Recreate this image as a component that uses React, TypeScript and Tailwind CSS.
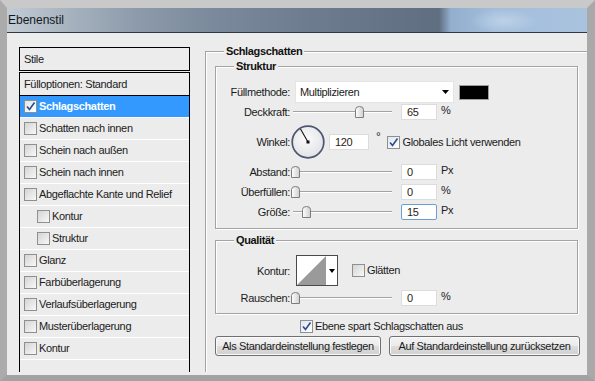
import React from "react";

type StyleRow = { label: string; checked?: boolean; active?: boolean; indent?: boolean };

const styleRows: StyleRow[] = [
  { label: "Schlagschatten", checked: true, active: true },
  { label: "Schatten nach innen" },
  { label: "Schein nach außen" },
  { label: "Schein nach innen" },
  { label: "Abgeflachte Kante und Relief" },
  { label: "Kontur", indent: true },
  { label: "Struktur", indent: true },
  { label: "Glanz" },
  { label: "Farbüberlagerung" },
  { label: "Verlaufsüberlagerung" },
  { label: "Musterüberlagerung" },
  { label: "Kontur" },
];

function Check({ checked }: { checked?: boolean }) {
  return (
    <span
      className={
        "flex h-[13px] w-[13px] shrink-0 items-center justify-center border border-[#8e8f8f] " +
        (checked
          ? "bg-[linear-gradient(135deg,#dfe6f0,#ffffff)]"
          : "bg-[linear-gradient(135deg,#d4d4d4,#f8f8f8)]")
      }
    >
      {checked && (
        <svg width="11" height="11" viewBox="0 0 11 11">
          <path d="M2 5.5 L4.5 8.5 L9.5 1.5" fill="none" stroke="#2b4b8c" strokeWidth="1.6" />
        </svg>
      )}
    </span>
  );
}

function Group({
  title,
  className,
  children,
}: {
  title: string;
  className?: string;
  children: React.ReactNode;
}) {
  return (
    <div
      className={`relative border border-[#a3a3a3] shadow-[inset_1px_1px_0_#fff,1px_1px_0_#fff] ${className ?? ""}`}
    >
      <span className="absolute left-[18px] top-[-8px] bg-[#ececec] px-[2px] text-[11px] font-bold leading-[14px] text-[#111]">
        {title}
      </span>
      {children}
    </div>
  );
}

function Label({ children }: { children: React.ReactNode }) {
  return <span className="w-[74px] shrink-0 text-right leading-[14px]">{children}</span>;
}

function Thumb() {
  return (
    <svg width="9" height="12" viewBox="0 0 9 12">
      <defs>
        <linearGradient id="th" x1="0" y1="0" x2="1" y2="0">
          <stop offset="0" stopColor="#ffffff" />
          <stop offset="1" stopColor="#cfcfcf" />
        </linearGradient>
      </defs>
      <path d="M0.5 11.5 V3.5 Q0.5 0.5 4.5 0.5 Q8.5 0.5 8.5 3.5 V11.5 Z" fill="url(#th)" stroke="#7d7d7d" />
    </svg>
  );
}

function Slider({ thumb }: { thumb: string }) {
  return (
    <div className="relative ml-[1px] h-[12px] w-[104px] shrink-0">
      <div className="absolute left-[2px] right-[3px] top-[5px] h-[2px] border-t border-[#a2a2a2] bg-white" />
      <div className={`absolute top-0 ${thumb}`}>
        <Thumb />
      </div>
    </div>
  );
}

function NumBox({ value, focus, className }: { value: string; focus?: boolean; className?: string }) {
  return (
    <div
      className={
        `flex h-[16px] shrink-0 items-center bg-white pl-[5px] leading-none text-[#2a2114] ` +
        (focus ? "rounded-[2px] border border-[#6a9fd4] " : "border border-[#dcdcdc] ") +
        (className ?? "w-[36px]")
      }
    >
      {value}
    </div>
  );
}

function SliderRow({
  label,
  thumb,
  value,
  unit,
  focus,
  className,
}: {
  label: string;
  thumb: string;
  value: string;
  unit: string;
  focus?: boolean;
  className?: string;
}) {
  return (
    <div className={`flex h-[16px] items-center ${className ?? ""}`}>
      <Label>{label}</Label>
      <Slider thumb={thumb} />
      <div className="ml-[6px]">
        <NumBox value={value} focus={focus} />
      </div>
      <span className="ml-[4px] self-start leading-[12px]">{unit}</span>
    </div>
  );
}

function Dial() {
  return (
    <svg width="34" height="34" viewBox="0 0 34 34" className="ml-[1px] shrink-0">
      <defs>
        <radialGradient id="dg" cx="0.45" cy="0.4" r="0.6">
          <stop offset="0" stopColor="#fbfbfb" />
          <stop offset="1" stopColor="#e2e3e6" />
        </radialGradient>
      </defs>
      <circle cx="17" cy="17" r="15.8" fill="url(#dg)" stroke="#4d5672" strokeWidth="1.7" />
      <line x1="17" y1="17" x2="9.5" y2="4" stroke="#111" strokeWidth="1.1" />
      <rect x="15.5" y="15.5" width="3" height="3" fill="#111" />
    </svg>
  );
}

function Button({ children, className }: { children: React.ReactNode; className: string }) {
  return (
    <div
      className={`flex h-[20px] items-center justify-center rounded-[3px] border border-[#707070] bg-[linear-gradient(#f3f3f3_0%,#ebebeb_48%,#dddddd_52%,#d0d0d0_100%)] shadow-[inset_0_0_0_1px_#fbfbfb] ${className}`}
    >
      {children}
    </div>
  );
}

export default function App() {
  return (
    <div className="h-[381px] w-[595px] overflow-hidden border-b-[6px] border-l-[7px] border-r-[8px] border-t-[8px] border-b-[#a2a2a2] border-l-[#ababab] border-r-[#a9a9a9] border-t-[#c9c9c9] bg-[#ececec] font-['Liberation_Sans',Arial,sans-serif] text-[11px] tracking-[-0.35px] text-[#1b1b1b]">
      <div className="flex h-full flex-col">
        <div className="flex h-[24px] items-center bg-[radial-gradient(ellipse_34px_12px_at_497px_13px,rgba(205,222,240,0.6),rgba(205,222,240,0)),linear-gradient(to_right,#c3ccd5_0%,#a8b4c0_10%,#8d9bab_22%,#7a899b_36%,#6d7d8f_52%,#647486_66%,#5f6f81_74.5%,#93aece_76.5%,#a3bedb_84%,#a9c3df_100%)] pl-[1px] text-[12px] tracking-normal text-[#121820]">
          Ebenenstil
        </div>
        <div className="h-[1px] bg-[#2f3943]" />
        <div className="flex flex-1">
          {/* left: styles list */}
          <div className="ml-[12px] flex w-[171px] flex-col pb-[3px] pt-[14px]">
            <div className="flex h-[24px] items-center border border-black pl-[4px]">Stile</div>
            <div className="mt-[1px] flex flex-1 flex-col border-x border-t border-black">
              <div className="flex h-[23px] items-center border-b border-black pl-[4px]">Fülloptionen: Standard</div>
              {styleRows.map((r, i) => (
                <div
                  key={i}
                  className={
                    "flex h-[22px] items-center gap-[2px] border-b border-white " +
                    (r.indent ? "pl-[17px] " : "pl-[4px] ") +
                    (r.active ? "bg-[#3399ff] font-bold text-white" : "")
                  }
                >
                  <Check checked={r.checked} />
                  <span>{r.label}</span>
                </div>
              ))}
            </div>
          </div>

          {/* right: settings */}
          <div className="ml-[15px] flex flex-1 flex-col pb-[3px] pt-[18px]">
            <div className="relative flex flex-1 flex-col border-l border-t border-[#a3a3a3] shadow-[inset_1px_1px_0_#fff]">
              <span className="absolute left-[18px] top-[-8px] bg-[#ececec] px-[2px] text-[11px] font-bold leading-[14px] text-[#111]">
                Schlagschatten
              </span>

              <Group title="Struktur" className="ml-[9px] mt-[14px] h-[163px] w-[363px]">
                <div className="flex flex-col pt-[14px]">
                  <div className="flex h-[22px] items-center">
                    <Label>Füllmethode:</Label>
                    <div className="ml-[5px] flex h-[22px] w-[159px] items-center justify-between border border-[#e4e4e4] bg-white pl-[4px] pr-[4px]">
                      <span>Multiplizieren</span>
                      <svg width="7" height="4" viewBox="0 0 7 4">
                        <path d="M0 0 H7 L3.5 4 Z" fill="#000" />
                      </svg>
                    </div>
                    <div className="ml-[5px] h-[15px] w-[30px] border border-[#9c9c9c] bg-black" />
                  </div>

                  <SliderRow label="Deckkraft:" thumb="left-[64px]" value="65" unit="%" className="mt-[1px]" />

                  <div className="mt-[5px] flex h-[34px] items-center">
                    <Label>Winkel:</Label>
                    <Dial />
                    <div className="ml-[4px]">
                      <NumBox value="120" className="w-[40px]" />
                    </div>
                    <span className="ml-[7px] mt-[-10px] text-[12px]">°</span>
                    <div className="ml-[7px] flex items-center gap-[2px]">
                      <Check checked />
                      <span>Globales Licht verwenden</span>
                    </div>
                  </div>

                  <SliderRow label="Abstand:" thumb="left-0" value="0" unit="Px" className="mt-[5px]" />
                  <SliderRow label="Überfüllen:" thumb="left-0" value="0" unit="%" className="mt-[4px]" />
                  <SliderRow label="Größe:" thumb="left-[11px]" value="15" unit="Px" focus className="mt-[4px]" />
                </div>
              </Group>

              <Group title="Qualität" className="ml-[9px] mt-[11px] h-[74px] w-[363px]">
                <div className="flex flex-col pt-[14px]">
                  <div className="flex h-[31px] items-center">
                    <Label>Kontur:</Label>
                    <div className="ml-[6px] flex h-[31px] w-[42px] border border-[#4a4a4a] bg-white">
                      <svg width="29" height="29" viewBox="0 0 29 29" className="shrink-0">
                        <path d="M0 29 L29 0 V29 Z" fill="#9a9a9a" />
                      </svg>
                      <div className="flex flex-1 items-center justify-center">
                        <svg width="6" height="4" viewBox="0 0 6 4">
                          <path d="M0 0 H6 L3 4 Z" fill="#000" />
                        </svg>
                      </div>
                    </div>
                    <div className="ml-[14px] flex items-center gap-[2px]">
                      <Check />
                      <span>Glätten</span>
                    </div>
                  </div>
                  <SliderRow label="Rauschen:" thumb="left-0" value="0" unit="%" className="mt-[4px]" />
                </div>
              </Group>

              <div className="ml-[94px] mt-[6px] flex h-[13px] items-center gap-[2px]">
                <Check checked />
                <span>Ebene spart Schlagschatten aus</span>
              </div>

              <div className="ml-[9px] mt-[3px] flex gap-[8px]">
                <Button className="w-[166px]">Als Standardeinstellung festlegen</Button>
                <Button className="w-[191px]">Auf Standardeinstellung zurücksetzen</Button>
              </div>
            </div>
          </div>
        </div>
      </div>
    </div>
  );
}
